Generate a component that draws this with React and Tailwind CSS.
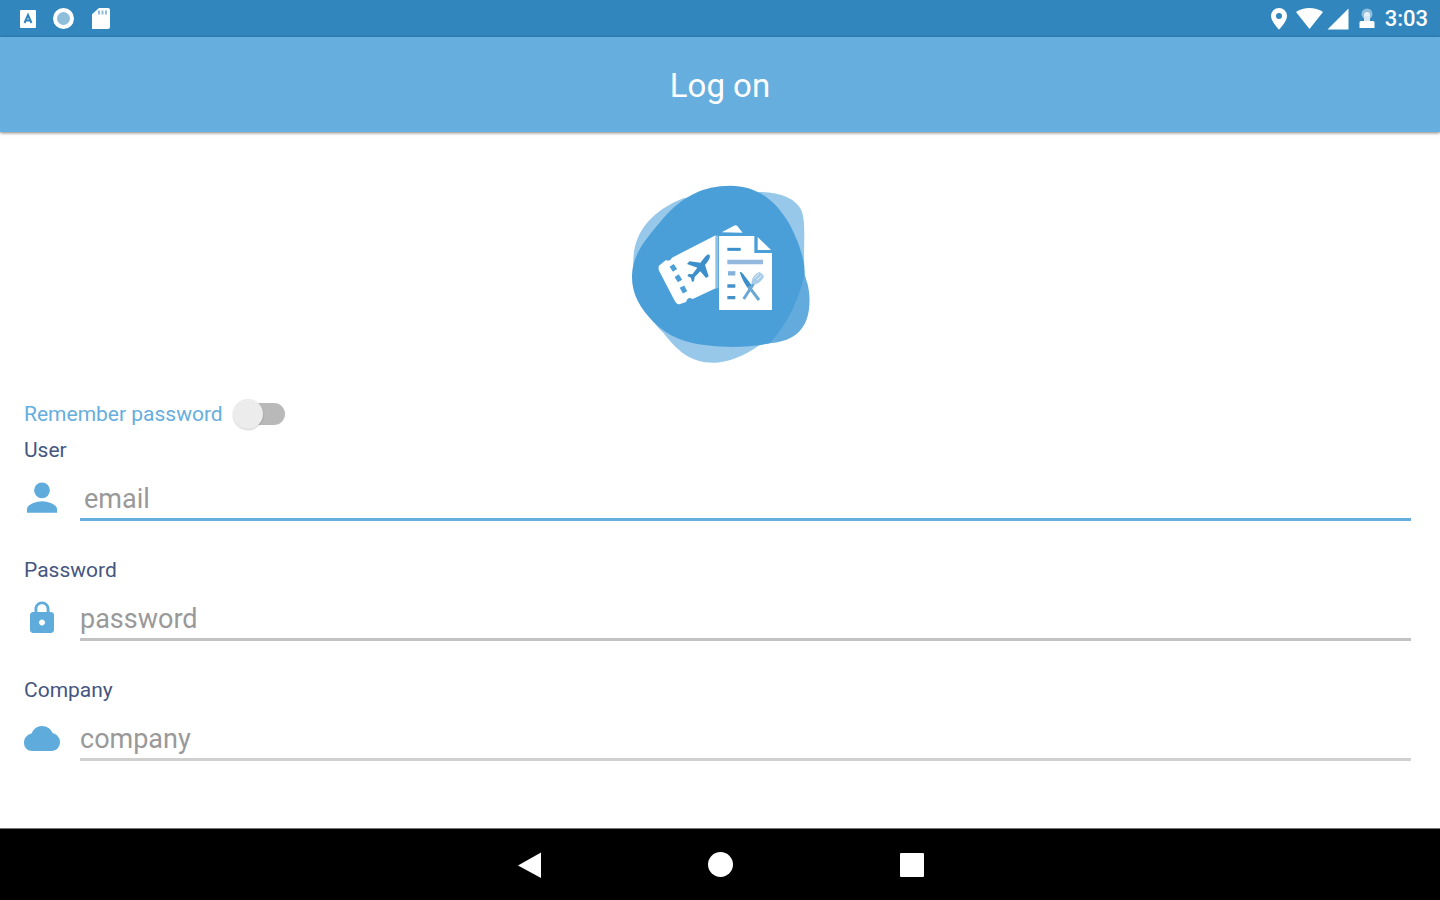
import React, { useState } from 'react';

const StatusBar = () => (
  <div className="flex h-[37px] items-center justify-between bg-[#3186bd] pr-3 pl-5 text-white">
    <div className="flex items-center gap-4">
      <svg className="h-5 w-4" viewBox="0 0 16 20" aria-hidden="true">
        <rect y="1" width="16" height="18" rx="1" fill="#fff" />
        <path d="M4.5 14 8 6l3.500 8M6 11.500h4" fill="none" stroke="#3186bd" strokeWidth="2" />
      </svg>
      <svg className="h-6 w-6" viewBox="0 0 24 24" aria-hidden="true">
        <circle cx="11.500" cy="11.500" r="8.500" fill="#8fbedd" stroke="#fff" strokeWidth="4" />
      </svg>
      <svg className="h-6 w-5" viewBox="2 0 20 24" aria-hidden="true">
        <path d="M9 1h9a2 2 0 0 1 2 2v17a2 2 0 0 1-2 2H3a2 2 0 0 1-2-2V8z" fill="#fff" />
        <path d="M9 3.500v4M12.500 3.500v4M16 3.500v4" stroke="#8fbedd" strokeWidth="2" />
      </svg>
    </div>

    <div className="flex items-center">
      <svg className="mr-2 h-6 w-[18px]" viewBox="0 0 18 24" aria-hidden="true">
        <path
          d="M10 1a8 8 0 0 0-8 8c0 5.500 8 13.500 8 13.500S18 14.500 18 9a8 8 0 0 0-8-8zm0 5a3 3 0 1 1 0 6 3 3 0 0 1 0-6z"
          fill="#fff"
        />
      </svg>
      <svg className="mr-1 h-6 w-7" viewBox="-1 0 28 24" aria-hidden="true">
        <path d="M0 5C8-.2 19-.2 27 5L13.500 22z" fill="#fff" />
      </svg>
      <svg className="mr-2 h-6 w-[22px]" viewBox="0 0 22 24" aria-hidden="true">
        <path d="M21.500 1.500v21H.5z" fill="#fff" />
      </svg>
      <svg className="mr-2 h-6 w-5" viewBox="0 0 20 24" aria-hidden="true">
        <circle cx="10" cy="7" r="5.500" fill="#8fbedd" />
        <circle cx="10" cy="8" r="3" fill="#e4f0f8" />
        <path d="M7 9h6v5H7z" fill="#d5e7f3" />
        <path d="M4 14h12a1.500 1.500 0 0 1 1.500 1.500V21H2.500v-5.500A1.500 1.500 0 0 1 4 14z" fill="#fff" />
      </svg>
      <span className="text-[22px] leading-6 font-medium">3:03</span>
    </div>
  </div>
);

const Logo = () => (
  <svg className="h-[210px] w-[220px]" viewBox="0 0 660 630" role="img" aria-label="Travel expenses">
    {/* Background blobs */}
    <path
      d="M70 270C72 190 120 125 220 85L440 66C500 64 560 82 576 125C588 165 580 220 583 290C570 390 520 480 450 525C400 560 350 578 310 578C240 578 200 540 160 488C100 430 68 360 70 270z"
      fill="#97c8e9"
    />
    <path
      d="M560 220C578 280 582 310 592 340C603 380 600 430 585 460C565 500 530 515 480 520L400 528z"
      fill="#62abdc"
    />
    <path
      d="M66 315C68 250 110 205 160 145C215 80 280 47 360 47C445 47 500 95 540 165C570 225 582 265 584 305C575 370 530 470 478 520C430 532 350 534 290 526C225 518 175 500 130 455C90 415 64 370 66 315z"
      fill="#4a9fd8"
    />

    {/* Plane ticket */}
    <path
      d="M146 288 168 270Q178 277 186 263L317 196V355L248 387Q234 378 228 396L208 403Q200 403 194 392L146 300z"
      fill="#fff"
    />
    <path d="M335 187 372 167Q380 163 386 173L398 188z" fill="#fff" />
    <path d="M185 286 195 301M200 317 210 333M216 350 225 367" stroke="#4a9fd8" strokeWidth="15" />
    <path
      d="M298 254c-6-2-12 4-26 24l-34-4-7 8 31 11-15 20-11-1-4 6 11 5 3 13 6-3 2-12 17-17 17 20 8-5-11-34c13-16 18-26 13-31z"
      fill="#3c8fca"
    />

    {/* Bill */}
    <path d="M327 198H433V249H486V420H327z" fill="#fff" />
    <path d="M443 201 483 240H443z" fill="#fff" />
    <path d="M321 197V355" stroke="#8fc1e4" strokeWidth="8" />
    <path d="M352 238H392" stroke="#3c8fca" strokeWidth="9" />
    <path d="M352 276H459" stroke="#94b9de" strokeWidth="14" />
    <path d="M354 310H376" stroke="#83b3dc" strokeWidth="13" />
    <path d="M352 348H376M352 383H376" stroke="#4592cb" strokeWidth="10" />

    {/* Knife and fork */}
    <path d="M389 306Q394 304 400 313L424 344 418 360Q400 340 389 306z" fill="#3c8fca" />
    <path d="M416 349 447 390M436 333 401 387" stroke="#6ba7d5" strokeWidth="9" />
    <path d="M424 338c2-16 14-30 25-32l12 10c2 12-15 24-28 29z" fill="#a9cde9" />
    <path d="M434 324 446 311M441 330 454 317" stroke="#e5f1fa" strokeWidth="3" />
  </svg>
);

const PersonIcon = () => (
  <svg className="h-9 w-9 shrink-0 fill-[#5facdc]" viewBox="2.4 2.5 19.2 19.2" aria-hidden="true">
    <circle cx="12" cy="8" r="4.200" />
    <path d="M12 13.800c-2.670 0-8 1.540-8 4.200v2h16v-2c0-2.660-5.330-4.200-8-4.200z" />
  </svg>
);

const LockIcon = () => (
  <svg className="h-9 w-9 shrink-0 fill-[#5facdc]" viewBox="0 0 24 24" aria-hidden="true">
    <path d="M18 8h-1V6c0-2.760-2.240-5-5-5S7 3.240 7 6v2H6c-1.100 0-2 .9-2 2v10c0 1.100.9 2 2 2h12c1.100 0 2-.9 2-2V10c0-1.100-.9-2-2-2zm-6 9c-1.100 0-2-.9-2-2s.9-2 2-2 2 .9 2 2-.9 2-2 2zm3.100-9H8.900V6c0-1.710 1.390-3.100 3.100-3.100s3.100 1.390 3.100 3.100v2z" />
  </svg>
);

const CloudIcon = () => (
  <svg className="h-9 w-9 shrink-0 fill-[#5facdc]" viewBox="0 0 36 36" aria-hidden="true">
    <path d="M18 6C23 6 27 9 28.500 13C32.500 14 36 17.500 36 22C36 27 32.500 31 27.500 31H8.500C3.500 31 0 27.500 0 23C0 18 3 14.500 7.500 13.500C9.500 9 13 6 18 6z" />
  </svg>
);

const Field = ({ id, label, type, placeholder, icon, inputClass }) => (
  <div className="mb-[35px]">
    <label htmlFor={id} className="block text-[21px] leading-7 text-[#45567f]">
      {label}
    </label>
    <div className="mt-4 flex items-start gap-5">
      {icon}
      <input
        id={id}
        type={type}
        placeholder={placeholder}
        className={`h-[41px] min-w-0 flex-1 border-b-[3px] bg-transparent text-[27px] text-gray-700 outline-none placeholder:text-[#999999] ${inputClass}`}
      />
    </div>
  </div>
);

const NavBar = () => (
  <nav className="flex h-[72px] items-center justify-center border-t border-[#777777] bg-black">
    <button type="button" aria-label="Back" className="flex w-48 justify-center">
      <svg className="h-7 w-7" viewBox="0 0 28 28" aria-hidden="true">
        <path d="M27 1.500V27L4 14.500z" fill="#fff" />
      </svg>
    </button>
    <button type="button" aria-label="Home" className="flex w-48 justify-center">
      <span className="h-[25px] w-[25px] rounded-full bg-white" />
    </button>
    <button type="button" aria-label="Recent apps" className="flex w-48 justify-center">
      <span className="h-6 w-6 rounded-[1px] bg-white" />
    </button>
  </nav>
);

const App = () => {
  const [remember, setRemember] = useState(false);

  return (
    <div className="flex min-h-screen flex-col bg-white font-[Roboto,'Liberation_Sans',sans-serif]">
      <StatusBar />

      {/* Header */}
      <header className="flex h-[95px] items-center justify-center bg-[#66aedd] pt-[2px] shadow-[0_1px_3px_rgba(0,0,0,0.5)]">
        <h1 className="text-[33px] leading-10 text-white">Log on</h1>
      </header>

      <main className="flex-1 pr-[29px] pl-6">
        <div className="flex justify-center pt-[38px] pl-[5px]">
          <Logo />
        </div>

        <form className="mt-[18px]">
          <label className="flex h-8 w-fit cursor-pointer items-center gap-[10px]">
            <span className="text-[21px] leading-7 text-[#66aedd]">Remember password</span>
            <input
              type="checkbox"
              role="switch"
              checked={remember}
              onChange={(e) => setRemember(e.target.checked)}
              className="peer sr-only"
            />
            <span className="flex h-[22px] w-[52px] items-center rounded-full bg-[linear-gradient(to_right,transparent_12px,#b9b9b9_12px)] peer-checked:justify-end peer-checked:bg-[#66aedd]">
              <span className="h-[30px] w-[30px] shrink-0 rounded-full bg-[#ececec] shadow-[0_1px_2px_rgba(0,0,0,0.2)]" />
            </span>
          </label>

          <div className="mt-[6px]">
            <Field
              id="user"
              label="User"
              type="email"
              placeholder="email"
              icon={<PersonIcon />}
              inputClass="border-[#66aedd] pl-1"
            />
            <Field
              id="password"
              label="Password"
              type="password"
              placeholder="password"
              icon={<LockIcon />}
              inputClass="border-[#c2c2c2]"
            />
            <Field
              id="company"
              label="Company"
              type="text"
              placeholder="company"
              icon={<CloudIcon />}
              inputClass="border-[#d0d0d0]"
            />
          </div>
        </form>
      </main>

      <NavBar />
    </div>
  );
};

export default App;
